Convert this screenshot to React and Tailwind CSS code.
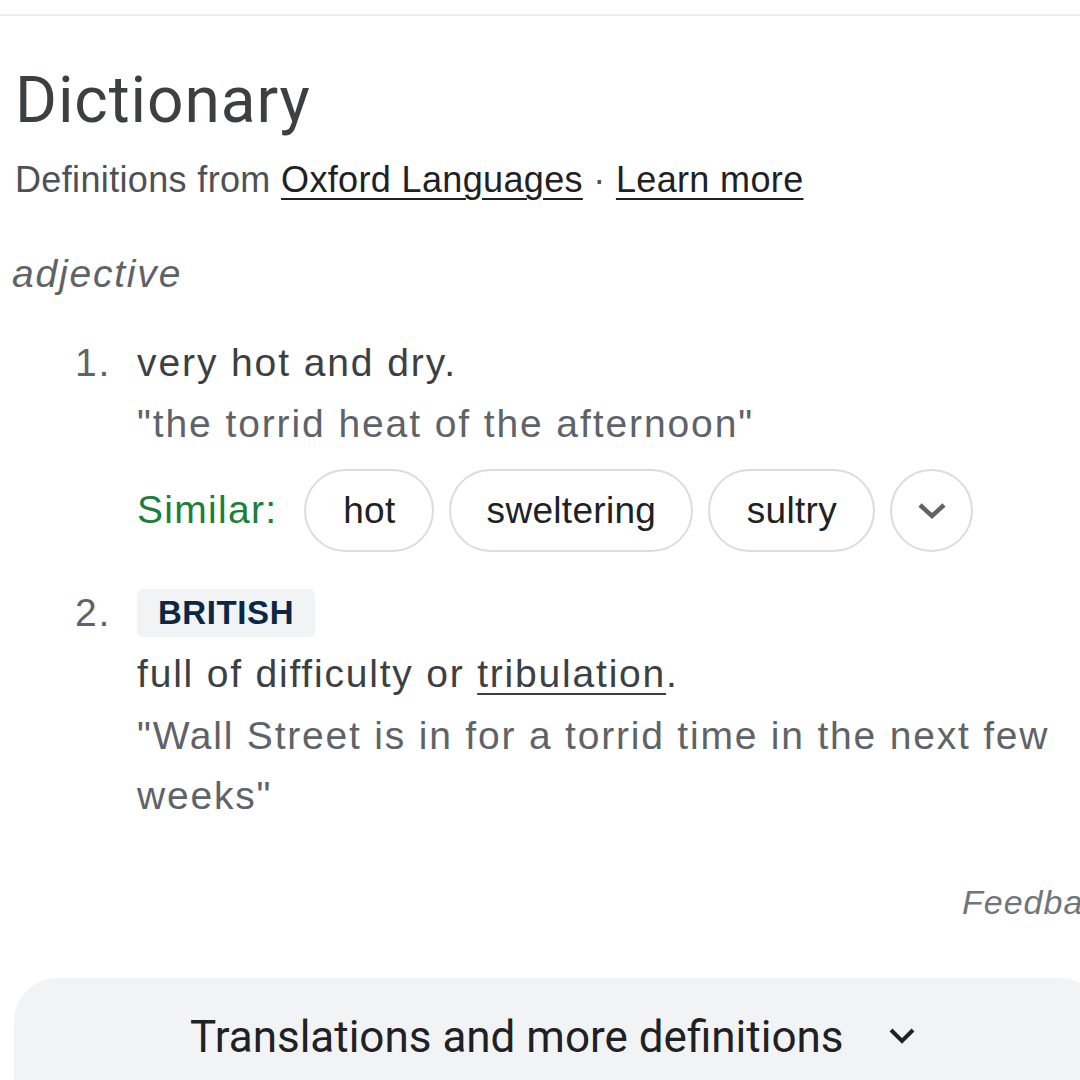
export default function App() {
  const body = { fontFamily: '"Liberation Sans", Arial, sans-serif' };
  const pill =
    "h-[83px] flex items-center justify-center rounded-full border-2 border-[#dadce0] text-[37px] text-[#202124] tracking-[0.3px]";
  return (
    <div className="w-[1080px] h-[1080px] overflow-hidden bg-white relative" style={body}>
      <div className="h-[14px]" />
      <div className="h-[2px] bg-[#ececec]" />
      <div className="pl-[15px]">
        <h1
          className="mt-[50px] text-[64px] leading-[70px] text-[#3c4043] font-normal tracking-[0.9px]"
          style={{ fontFamily: 'Roboto, "Open Sans", sans-serif' }}
        >
          Dictionary
        </h1>
        <div className="mt-[19px] text-[36px] leading-[50px] text-[#4d5156] tracking-[0.35px] whitespace-nowrap">
          Definitions from{" "}
          <span className="underline decoration-2 underline-offset-[6px] text-[#202124]">Oxford Languages</span>
          {" · "}
          <span className="underline decoration-2 underline-offset-[6px] text-[#202124]">Learn more</span>
        </div>
        <div className="mt-[44px] -ml-[3px] text-[39px] leading-[50px] italic text-[#5f6368] tracking-[1.8px]">
          adjective
        </div>
      </div>

      <div className="mt-[33px] flex text-[39px] tracking-[1.9px]">
        <div className="w-[137px] shrink-0 pl-[75px] leading-[61px] text-[#5f6368]">1.</div>
        <div className="flex-1">
          <div className="leading-[61px] text-[#3c4043]">very hot and dry.</div>
          <div className="leading-[61px] text-[#5f6368]">"the torrid heat of the afternoon"</div>
          <div className="mt-[15px] flex items-center gap-[15px]">
            <div className="text-[#188038] mr-[12px] tracking-[1.3px]">Similar:</div>
            <div className={pill + " w-[130px]"}>hot</div>
            <div className={pill + " w-[244px]"}>sweltering</div>
            <div className={pill + " w-[167px]"}>sultry</div>
            <div className="h-[83px] w-[83px] flex items-center justify-center rounded-full border-2 border-[#dadce0]">
              <svg width="30" height="20" viewBox="0 0 30 20" fill="none">
                <path d="M3 4 L15 15 L27 4" stroke="#5f6368" strokeWidth="4.5" />
              </svg>
            </div>
          </div>
        </div>
      </div>

      <div className="mt-[37px] flex text-[39px] tracking-[1.8px]">
        <div className="w-[137px] shrink-0 pl-[75px] leading-[48px] text-[#5f6368]">2.</div>
        <div className="flex-1">
          <div className="flex w-[178px] h-[48px] items-center justify-center rounded-[6px] bg-[#f1f3f4] text-[33px] leading-[48px] font-bold text-[#0b2743] tracking-[0.6px]">
            BRITISH
          </div>
          <div className="mt-[7px] leading-[60px] text-[#3c4043]">
            full of difficulty or{" "}
            <span className="underline decoration-2 underline-offset-[6px]">tribulation</span>.
          </div>
          <div className="mt-[2px] leading-[60px] text-[#5f6368] pr-[20px]">
            "Wall Street is in for a torrid time in the next few weeks"
          </div>
        </div>
      </div>

      <div className="mt-[56px] pl-[962px] whitespace-nowrap text-[34px] leading-[40px] italic text-[#70757a] tracking-[1px]">
        Feedback
      </div>

      <div className="mt-[56px] ml-[14px] w-[1090px] h-[160px] rounded-[44px] bg-[#f1f3f4] flex items-start pt-[29px]">
        <div
          className="ml-[176px] text-[44px] leading-[60px] text-[#202124] whitespace-nowrap"
          style={{ fontFamily: 'Roboto, sans-serif' }}
        >
          Translations and more definitions
        </div>
        <svg className="ml-[44px] mt-[16px]" width="30" height="24" viewBox="0 0 30 24" fill="none">
          <path d="M3 7 L14 18 L25 7" stroke="#202124" strokeWidth="4" />
        </svg>
      </div>
    </div>
  );
}
